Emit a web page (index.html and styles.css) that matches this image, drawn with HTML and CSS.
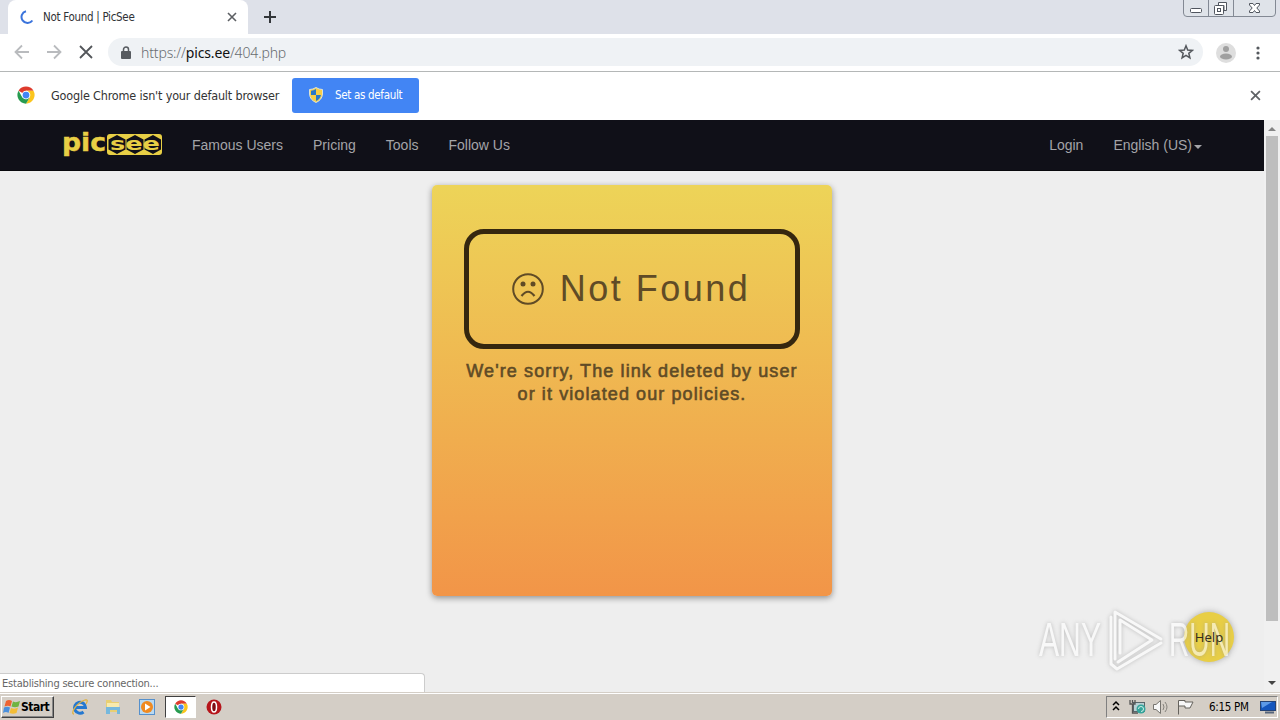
FILE: index.html
```html
<!DOCTYPE html>
<html lang="en">
<head>
<meta charset="utf-8">
<title>Not Found | PicSee</title>
<link rel="stylesheet" href="styles.css">
</head>
<body>
<svg width="0" height="0" class="defs">
  <symbol id="chrome" viewBox="0 0 48 48">
    <circle cx="24" cy="24" r="23" fill="#fff"/>
    <path d="M24 24 4.1 12.5A23 23 0 0 1 43.9 12.5H24Z" fill="#de3b2d"/>
    <path d="M24 12.5H43.9A23 23 0 0 1 24 47L34 29.7Z" fill="#fbc51d"/>
    <path d="M4.1 12.5 14 29.7 24 35.5 34 29.7 24 47A23 23 0 0 1 4.1 12.5Z" fill="#279b50"/>
    <circle cx="24" cy="24" r="11.5" fill="#fff"/>
    <circle cx="24" cy="24" r="9" fill="#4285f4"/>
  </symbol>
  <symbol id="cross" viewBox="0 0 10 10"><path d="M1 1 9 9M9 1 1 9" fill="none" stroke="currentColor" stroke-width="1.6"/></symbol>
</svg>
<div class="screen">
  <header class="tabstrip">
    <div class="tab">
      <svg class="spinner" width="14" height="14" viewBox="0 0 14 14"><path d="M6 1.2A6 6 0 1 0 12.4 10.5" fill="none" stroke="#3b74dc" stroke-width="2"/></svg>
      <span class="tab-title">Not Found | PicSee</span>
      <svg class="tab-close" width="10" height="10"><use href="#cross"/></svg>
    </div>
    <svg class="new-tab" width="12" height="12" viewBox="0 0 12 12"><path d="M6 0V12M0 6H12" stroke="#33363a" stroke-width="2"/></svg>
    <svg class="window-controls" width="94" height="18" viewBox="0 0 94 18" fill="none" stroke="#838994">
      <path d="M.5 0V13Q.5 16.500 4 16.500H89Q92.500 16.500 92.500 13V0M25.500 0V16M50.500 0V16" fill="#dfe3e9"/>
      <g stroke="#50555e" fill="#fff"><rect x="7.500" y="8.500" width="11" height="4" rx="1"/><path d="M35.500 2.500H43.500V10.500H41V5.500H35.500Z"/><rect x="31.500" y="5.500" width="9" height="9" rx="1"/><rect x="34.500" y="8.500" width="3" height="3"/><path d="M66.500 3.500H70L71.500 5.500 73 3.500H76.500V5L73.800 8 76.500 11V12.500H73L71.500 10.500 70 12.500H66.500V11L69.200 8 66.500 5Z"/></g>
    </svg>
  </header>

  <div class="toolbar">
    <svg width="100" height="38" viewBox="0 0 100 38" fill="none" stroke-width="1.8">
      <path d="M29 18H16M22 11.500 15.500 18 22 24.500M47 18H60M54 11.500 60.500 18 54 24.500" stroke="#b9bbbe"/>
      <path d="M80 12 92 24M92 12 80 24" stroke="#53565a"/>
    </svg>
    <div class="omnibox">
      <svg width="10" height="13" viewBox="0 0 10 13"><path d="M2.500 6V3.500A2.500 2.500 0 0 1 7.500 3.500V6" fill="none" stroke="#575b60" stroke-width="1.500"/><rect y="5" width="10" height="8" rx="1" fill="#575b60"/></svg>
      <span class="url">https://<b>pics.ee</b>/404.php</span>
      <svg class="star" width="16" height="16" viewBox="0 0 16 16"><path d="M8 1.800 9.700 6.100 14.300 6.400 10.800 9.300 11.900 13.800 8 11.300 4.100 13.800 5.200 9.300 1.700 6.400 6.300 6.100Z" fill="none" stroke="#55595e" stroke-width="1.500"/></svg>
    </div>
    <svg class="avatar" width="20" height="20" viewBox="0 0 20 20"><circle cx="10" cy="10" r="10" fill="#dedede"/><circle cx="10" cy="6" r="3" fill="#a0a0a0"/><ellipse cx="10" cy="13.500" rx="6" ry="3" fill="#a0a0a0"/></svg>
    <svg class="dots" width="4" height="14" viewBox="0 0 4 14" fill="#55595e"><circle cx="2" cy="2" r="1.600"/><circle cx="2" cy="7" r="1.600"/><circle cx="2" cy="12" r="1.600"/></svg>
  </div>

  <div class="infobar">
    <svg width="18" height="18"><use href="#chrome"/></svg>
    <span class="info-text">Google Chrome isn't your default browser</span>
    <div class="default-btn">
      <svg width="14" height="16" viewBox="0 0 14 16"><path d="M7 .5Q10 2.500 13.500 2.500V7Q13 13 7 15.500 1 13 .5 7V2.500Q4 2.500 7 .5Z" fill="#f7ce45"/><path d="M7 2Q4.500 3.500 2 3.700V8H7ZM7 8H12Q11 12.500 7 14Z" fill="#2878c8"/><path d="M7 .5Q10 2.500 13.500 2.500V7Q13 13 7 15.500 1 13 .5 7V2.500Q4 2.500 7 .5Z" fill="none" stroke="#dce3d5"/></svg>
      <span>Set as default</span>
    </div>
    <svg class="info-close" width="11" height="11"><use href="#cross"/></svg>
  </div>

  <div class="viewport">
    <div class="page">
      <nav class="nav">
        <svg class="logo" width="100" height="22" viewBox="0 0 100 22">
          <rect x="45" width="55" height="21" rx="3" fill="#e8cf45"/>
          <path d="M46.500 5.500 55 1 63.500 5.500V15.500L55 20 46.500 15.500ZM64.500 5.500 73 1 81.500 5.500V15.500L73 20 64.500 15.500ZM82.500 5.500 91 1 99 5.500V15.500L91 20 82.500 15.500Z" fill="#101018"/>
          <g fill="#e8cf45" stroke="#e8cf45"><text class="logo-pic" x="0" y="17" textLength="44" lengthAdjust="spacingAndGlyphs">pic</text><text class="logo-see" x="48" y="15.500" textLength="50" lengthAdjust="spacingAndGlyphs">see</text></g>
        </svg>
        <a>Famous Users</a><a>Pricing</a><a>Tools</a><a>Follow Us</a>
        <a class="login">Login</a><a class="language">English (US)<i class="caret"></i></a>
      </nav>
      <main class="card">
        <h1 class="notice"><svg width="32" height="32" viewBox="0 0 32 32"><circle cx="16" cy="16" r="14.800" fill="none" stroke="currentColor" stroke-width="2"/><circle cx="11" cy="11" r="2.500" fill="currentColor"/><circle cx="21" cy="11" r="2.500" fill="currentColor"/><path d="M9.500 23Q16 14.500 22.500 23" fill="none" stroke="currentColor" stroke-width="2.200"/></svg><span>Not Found</span></h1>
        <p class="message">We're sorry, The link deleted by user<br>or it violated our policies.</p>
      </main>
      <div class="help-disc"></div>
      <svg class="watermark" width="200" height="68" viewBox="0 0 200 68">
        <g class="mark-text"><text x="3" y="49" textLength="62" lengthAdjust="spacingAndGlyphs">ANY</text><text x="133" y="49" textLength="61" lengthAdjust="spacingAndGlyphs">RUN</text></g>
        <path d="M84 46V13L116 33 82 55M79 52V5L125 32M75 10V57L81 62 125 36" fill="none" stroke="#fff" stroke-width="3" stroke-linejoin="round" stroke-linecap="round"/>
      </svg>
      <div class="help">Help</div>
      <div class="status">Establishing secure connection...</div>
    </div>
    <div class="scrollbar"><i class="up"></i><div class="thumb"></div><i class="down"></i></div>
  </div>

  <footer class="taskbar">
    <div class="start"><svg width="18" height="16" viewBox="0 0 18 16"><path d="M3 2Q6 0 9 2L7.500 7.500Q5 6 1.500 7.500Z" fill="#ed6332"/><path d="M10 2.500Q13 4 17 2L15.500 7.500Q12 9 8.500 7.500Z" fill="#6fb442"/><path d="M1 8.500Q4 7 7 8.500L5.500 14Q3 12 0 14Z" fill="#4a8fdc"/><path d="M8 9Q12 10.500 15 8.500L13.500 14Q10 15.500 6.500 14Z" fill="#f3bd36"/></svg><b>Start</b></div>
    <svg class="quick ie" width="18" height="18" viewBox="0 0 18 18"><path d="M4 9.500H14.500A5.500 5.500 0 1 0 12.500 14" fill="none" stroke="#2478d0" stroke-width="3"/><path d="M3 16C-1 16 5 5 14 2Q18 1 15 6" fill="none" stroke="#e0b343" stroke-width="1.300"/></svg>
    <svg class="quick folder" width="18" height="18" viewBox="0 0 18 18"><path d="M2 4V2H7L8 4H15V14H2Z" fill="#e8cf73"/><path d="M3 5H15V9H3Z" fill="#f7eaad"/><path d="M2 9H16V16H13V12H6V16H2Z" fill="#75b8dd"/></svg>
    <svg class="quick player" width="16" height="16" viewBox="0 0 16 16"><rect x=".5" y=".5" width="15" height="15" fill="#b9d9f1" stroke="#5590cc"/><circle cx="8" cy="8" r="6" fill="#f08a20"/><path d="M6 4.500 11.500 8 6 11.500Z" fill="#fff"/></svg>
    <div class="active-task"><svg width="14" height="14"><use href="#chrome"/></svg></div>
    <svg class="quick opera" width="16" height="16" viewBox="0 0 16 16"><circle cx="8" cy="8" r="7.500" fill="#b6151b"/><ellipse cx="8" cy="8" rx="2.500" ry="5" fill="#7f0c13" stroke="#fff" stroke-width="1.500"/></svg>
    <div class="tray">
      <svg width="88" height="20" viewBox="0 0 88 20" fill="none"><path d="M6 8 9 5 12 8M6 13 9 10 12 13" stroke="#000" stroke-width="1.500"/>
        <rect x="26.500" y="5.500" width="11" height="9" fill="#b8d0d3" stroke="#58666a"/><path d="M23 3V7H28V3M25.500 7V16H31M25.500 3V6" stroke="#555" stroke-width="1.300"/><circle cx="34" cy="12" r="4.500" fill="#35a49b"/><path d="M31.500 12A2.500 2.500 0 1 1 34 14.500" stroke="#d3f0e8"/>
        <path d="M46.500 7.500H49L53.500 3.500V16.500L49 12.500H46.500Z" fill="#f7f7f7" stroke="#76746f"/><path d="M56 7Q58 10 56 13M58 5Q62 10 58 15" stroke="#85827c"/>
        <path d="M71.500 17.500V3.500H78V5H86L83 11H78V9H72" fill="#f7f7f7" stroke="#65625d"/></svg>
      <time>6:15 PM</time>
      <svg width="16" height="14" viewBox="0 0 16 14"><rect x=".5" y="1.500" width="15" height="9" fill="#1556bd" stroke="#254375"/><path d="M1 2H12L2 8Z" fill="#5d9ae8"/><path d="M5 12.500H14" stroke="#56657b" stroke-width="2"/></svg>
    </div>
  </footer>
</div>
</body>
</html>
```
FILE: styles.css
```css
* { box-sizing: border-box; }
body { margin: 0; overflow: hidden; font-family: "DejaVu Sans Condensed", "DejaVu Sans", sans-serif; font-size: 11px; }
svg { display: block; flex: none; }
.defs { position: absolute; }
.screen { width: 1280px; height: 720px; display: flex; flex-direction: column; background: #fff; white-space: nowrap; }

.tabstrip { height: 34px; flex: none; display: flex; background: #dee1e9; }
.tab { width: 240px; margin-left: 8px; background: #fff; border-radius: 8px 8px 0 0; display: flex; align-items: center; padding: 0 11px 0 12px; color: #303236; }
.tab-title { margin-left: 9px; font-size: 11.500px; letter-spacing: -.3px; }
.tab-close { margin-left: auto; color: #5c5f63; }
.new-tab { margin: 11px 0 0 16px; }
.window-controls { margin-left: auto; margin-right: 3px; }

.toolbar { height: 38px; flex: none; display: flex; align-items: center; border-bottom: 1px solid #b4b7b7; }
.omnibox { width: 1095px; height: 28px; margin-left: 8px; margin-top: -1px; border-radius: 14px; background: #eff2f5; display: flex; align-items: center; padding: 0 9px 0 13px; }
.url { margin-left: 10px; font-size: 14px; color: #686c70; letter-spacing: -.15px; font-family: "Noto Sans", sans-serif; font-weight: 300; }
.url b { font-weight: 400; color: #111; }
.star { margin-left: auto; }
.avatar { margin-left: 13px; }
.dots { margin-left: 20px; }

.infobar { height: 48px; flex: none; display: flex; align-items: center; padding: 0 19px 2px 17px; color: #333; }
.info-text { width: 229px; margin-left: 16px; font-size: 12.500px; letter-spacing: -.17px; }
.default-btn { width: 127px; height: 35px; margin-left: 12px; border-radius: 3px; background: #4285f4; color: #fff; display: flex; align-items: center; padding-left: 17px; gap: 12px; font-size: 11.500px; letter-spacing: -.32px; }
.info-close { margin-left: auto; color: #606367; }

.viewport { height: 572px; flex: none; display: flex; }
.page { position: relative; width: 1264px; background: #eee; font-family: "Liberation Sans", Arial, sans-serif; }
.nav { height: 51px; background: #101018; border-bottom: 1px solid #08080c; display: flex; align-items: center; padding: 0 62px; gap: 30px; font-size: 14px; color: #a4a4a8; }
.logo { overflow: visible; }
.logo-pic, .logo-see { font-family: "DejaVu Sans", sans-serif; font-weight: 700; }
.logo-pic { font-size: 24px; stroke-width: .4px; }
.logo-see { font-size: 18px; stroke-width: 0; }
.login { margin-left: auto; }
.language { display: flex; align-items: center; }
.caret { border: 4px solid transparent; border-top-color: #a4a4a8; border-bottom: 0; margin: 3px 0 0 2px; }
.card { width: 400px; height: 411px; margin: 14px auto 0; padding: 44px 32px 0; border-radius: 5px; background: linear-gradient(#edd458, #f29548); box-shadow: 0 2px 6px rgba(0, 0, 0, .4); color: #604b26; }
.notice { height: 120px; margin: 0; border: 5px solid #35270f; border-radius: 20px; display: flex; align-items: center; justify-content: center; gap: 16px; padding-right: 2px; font-weight: 400; font-size: 36px; letter-spacing: 2.500px; }
.message { margin: 11px -10px 0; text-align: center; font-weight: 400; font-size: 18px; line-height: 23px; letter-spacing: 1.100px; -webkit-text-stroke: .6px #604b26; }
.help-disc, .help { position: absolute; left: 1184px; top: 492px; width: 50px; height: 50px; border-radius: 50%; }
.help-disc { background: #e8ce45; box-shadow: 0 0 6px #aaa; }
.help { display: flex; align-items: center; justify-content: center; font: 13px "Noto Sans", sans-serif; color: #332e20; }
.watermark { position: absolute; left: 1036px; top: 487px; opacity: .6; filter: drop-shadow(0 0 2px #999); overflow: visible; }
.mark-text { font: 48px "Liberation Sans", Arial, sans-serif; fill: #fff; }
.status { position: absolute; left: 0; bottom: 0; width: 425px; height: 19px; padding: 3px 2px; background: #fff; border: solid #ccc; border-width: 1px 1px 0 0; border-radius: 0 4px 0 0; font: 11px "DejaVu Sans Condensed", "DejaVu Sans", sans-serif; letter-spacing: -.2px; color: #666; }
.scrollbar { width: 16px; background: #f0f0f0; display: flex; flex-direction: column; align-items: center; }
.up, .down { border: 4px solid transparent; }
.up { border-bottom-color: #858585; border-top: 0; margin: 7px 0 5px; }
.thumb { width: 12px; height: 485px; background: #bebebe; }
.down { border-top-color: #444; border-bottom: 0; margin-top: 60px; }

.taskbar { height: 28px; background: #d4cec6; border-top: 1px solid #d4cec6; box-shadow: inset 0 1px #fff; display: flex; align-items: center; padding: 3px 2px 2px 1px; }
.start { width: 53px; height: 22px; border: 1px solid; border-color: #fff #404040 #404040 #fff; box-shadow: inset -1px -1px #888; display: flex; align-items: center; padding-left: 1px; color: #000; font-size: 12px; letter-spacing: -.5px; }
.ie { margin-left: 17px; }
.folder { margin-left: 15px; }
.player { margin-left: 17px; }
.active-task { width: 31px; height: 22px; margin-left: 10px; background: #fff; border: 1px solid; border-color: #404040 #fff #fff #404040; display: flex; align-items: center; justify-content: center; }
.opera { margin-left: 10px; }
.tray { width: 172px; height: 22px; margin-left: auto; border: 1px solid; border-color: #808080 #fff #fff #808080; display: flex; align-items: center; font-size: 11.500px; color: #000; }
.tray time { width: 51px; margin-left: 14px; letter-spacing: -.3px; }
```
